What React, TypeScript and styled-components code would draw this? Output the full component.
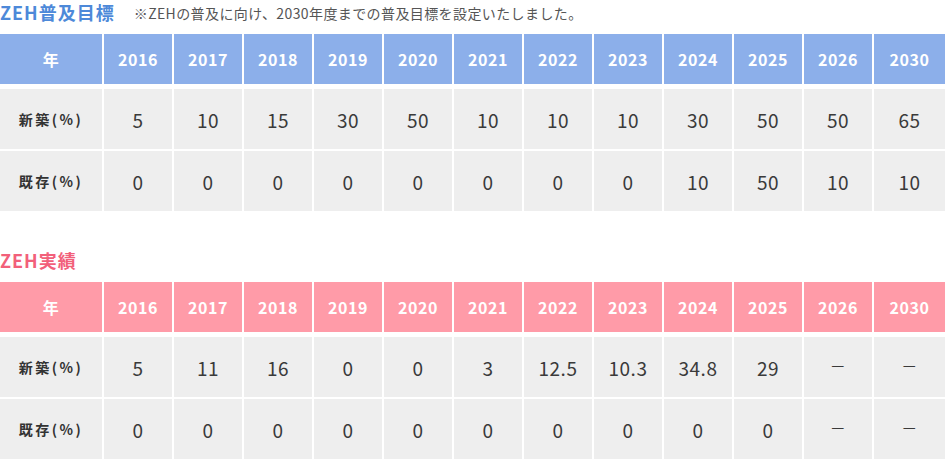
import React from 'react'
import styled, { createGlobalStyle } from 'styled-components'

interface TableProps {
  head: string,
  rows: { label: string, values: string[] }[],
}

const YEARS: string[] = ['2016', '2017', '2018', '2019', '2020', '2021', '2022', '2023', '2024', '2025', '2026', '2030'];

const TARGET = [
  { label: '新築(%)', values: ['5', '10', '15', '30', '50', '10', '10', '10', '30', '50', '50', '65'] },
  { label: '既存(%)', values: ['0', '0', '0', '0', '0', '0', '0', '0', '10', '50', '10', '10'] },
];

const RESULT = [
  { label: '新築(%)', values: ['5', '11', '16', '0', '0', '3', '12.5', '10.3', '34.8', '29', '－', '－'] },
  { label: '既存(%)', values: ['0', '0', '0', '0', '0', '0', '0', '0', '0', '0', '－', '－'] },
];

const GlobalStyle = createGlobalStyle`
  body {
    margin: 0;
    background: #fff;
    font-family: "Noto Sans CJK JP", "Noto Sans", sans-serif;
    color: #333;
  }
`;

const Page = styled.div`
  width: 945px;
  overflow: hidden;
`;

const Section = styled.section<{ $gap?: number }>`
  margin-top: ${({ $gap }) => $gap || 0}px;
`;

const Heading = styled.div`
  display: flex;
  align-items: center;
  height: 24px;
  margin-bottom: 10px;
  gap: 19px;
`;

const Title = styled.h2<{ $color: string }>`
  margin: 0;
  font-size: 18px;
  font-weight: bold;
  letter-spacing: 1px;
  color: ${({ $color }) => $color};
`;

const Note = styled.p`
  margin: 2px 0 0;
  font-size: 14px;
  color: #555;
  letter-spacing: 0.4px;
`;

const Table = styled.div`
  display: flex;
  flex-direction: column;
  gap: 2px;
`;

const Row = styled.div`
  display: grid;
  grid-template-columns: 102px repeat(11, 68px) 1fr;
  column-gap: 2px;
`;

const HeadRow = styled(Row)`
  margin-bottom: 3px;
`;

const HeadCell = styled.div<{ $bg: string }>`
  height: 50px;
  display: flex;
  align-items: center;
  justify-content: center;
  background: ${({ $bg }) => $bg};
  color: #fff;
  font-size: 16px;
  font-weight: bold;
  letter-spacing: 0.6px;
`;

const LabelCell = styled.div`
  height: 60px;
  display: flex;
  align-items: center;
  justify-content: center;
  background: #eee;
  font-size: 14px;
  font-weight: bold;
  letter-spacing: 2.5px;
  color: #333;
`;

const ValueCell = styled(LabelCell)`
  font-size: 19px;
  font-weight: normal;
  letter-spacing: 0.5px;
  color: #3a3a3a;
`;

const Dash = styled.span`
  font-size: 16px;
  margin-top: -5px;
`;

const ZehTable: React.FC<TableProps & { color: string }> = ({ head, rows, color }) => (
  <Table>
    <HeadRow>
      <HeadCell $bg={color}>{head}</HeadCell>
      {YEARS.map(y => <HeadCell key={y} $bg={color}>{y}</HeadCell>)}
    </HeadRow>
    {rows.map(row => (
      <Row key={row.label}>
        <LabelCell>{row.label}</LabelCell>
        {row.values.map((v, i) => (
          <ValueCell key={i}>{v === '－' ? <Dash>{v}</Dash> : v}</ValueCell>
        ))}
      </Row>
    ))}
  </Table>
)

const App: React.FC = () => (
  <Page>
    <GlobalStyle />
    <Section>
      <Heading>
        <Title $color="#4d89d9">ZEH普及目標</Title>
        <Note>※ZEHの普及に向け、2030年度までの普及目標を設定いたしました。</Note>
      </Heading>
      <ZehTable head="年" rows={TARGET} color="#8cafea" />
    </Section>
    <Section $gap={37}>
      <Heading>
        <Title $color="#f2607a">ZEH実績</Title>
      </Heading>
      <ZehTable head="年" rows={RESULT} color="#ff9ba8" />
    </Section>
  </Page>
)

export default App;
